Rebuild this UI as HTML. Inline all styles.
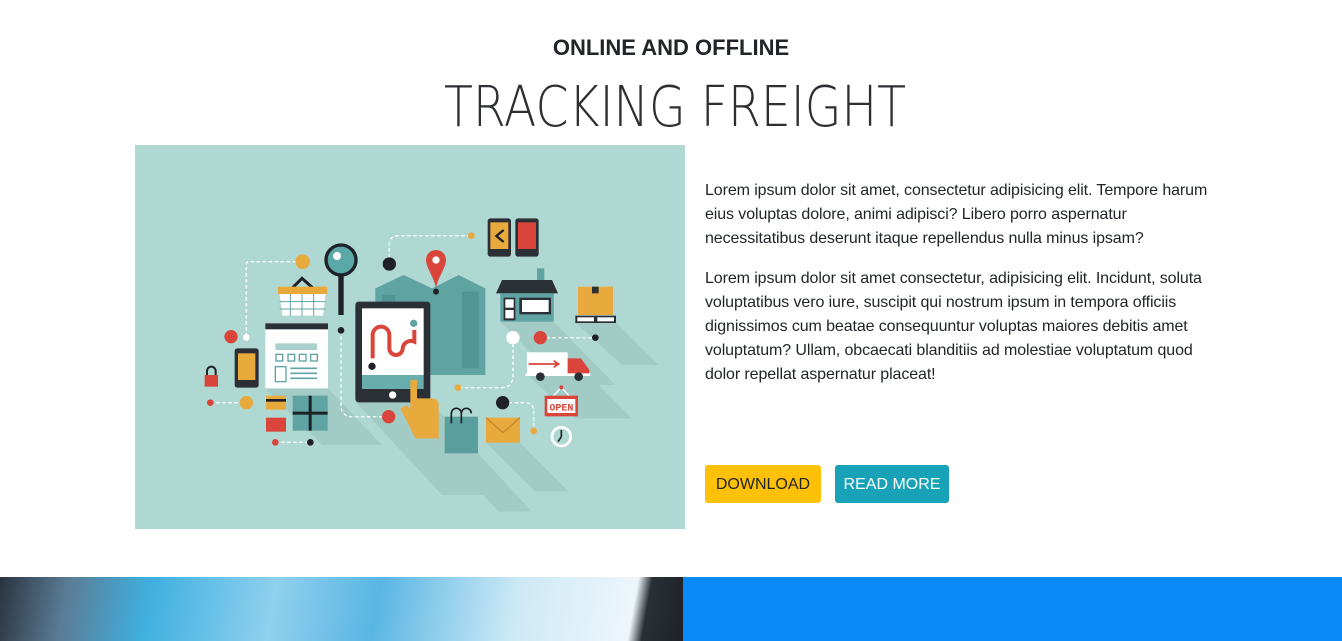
<!DOCTYPE html>
<html><head><meta charset="utf-8"><style>
*{margin:0;padding:0;box-sizing:border-box}
html,body{width:1342px;height:641px;overflow:hidden;background:#fff;font-family:"Liberation Sans",sans-serif;color:#212529}
.sub{position:absolute;top:34px;left:0;width:1342px;text-align:center;font-weight:bold;font-size:22px;color:#212529;line-height:28px}
.title{position:absolute;top:74px;left:0;width:1342px;height:64px}
.img{position:absolute;left:135px;top:145px;width:550px;height:384px;background:#b0d8d3}
.txt{position:absolute;left:705px;top:179px;width:560px;font-size:16px;line-height:24px;color:#212529;white-space:nowrap;letter-spacing:-0.1px}
.txt p{margin-bottom:16px}
.btn{position:absolute;top:465px;height:38px;font-size:16px;line-height:39px;text-align:center;border-radius:3px}
.b1{left:705px;width:116px;background:#ffc107;color:#212529}
.b2{left:835px;width:114px;background:#17a2b8;color:#fff}
.bl{position:absolute;left:0;top:577px;width:683px;height:64px;background:linear-gradient(100deg,#2a3440 0%,#5b7c95 10%,#3fb0e0 22%,#8fd0ee 40%,#5ab6e3 55%,#cde9f6 75%,#eef6fb 92%,#2a2f36 94%,#1e2228 100%)}
.br{position:absolute;left:683px;top:577px;width:659px;height:64px;background:#0a8af8}
</style></head><body>
<div class="sub">ONLINE AND OFFLINE</div>
<svg class="title" width="1342" height="64" viewBox="0 0 1342 64"><text x="444" y="52" textLength="462" lengthAdjust="spacingAndGlyphs" font-family="DejaVu Sans" font-weight="200" font-size="56" fill="#2d2f33">TRACKING FREIGHT</text></svg>
<div class="img">
<svg width="550" height="384" viewBox="0 0 1568 1152">
<rect width="1568" height="1152" fill="#b0d8d3"/>
<g fill="#a2cbc6">
<polygon points="620,770 845,770 1100,1050 880,1050"/>
<polygon points="888,925 988,925 1150,1100 1050,1100"/>
<polygon points="1012,893 1114,893 1260,1040 1160,1040"/>
<polygon points="350,730 538,730 700,900 520,900"/>
<polygon points="1055,530 1215,530 1400,720 1240,720"/>
<polygon points="1280,532 1402,532 1530,660 1420,660"/>
<polygon points="1135,690 1320,690 1450,820 1280,820"/>
</g>
<g fill="none" stroke="#fff" stroke-width="4" stroke-dasharray="10,8">
<path d="M460,350 H300 Q293,350 293,360 V575"/>
<path d="M722,355 V300 Q722,272 750,272 H968"/>
<path d="M577,556 V780 Q577,815 610,815 H720"/>
<path d="M1093,578 V690 Q1093,728 1060,728 H928"/>
<path d="M1175,578 H1340"/>
<path d="M1062,773 H1130 Q1155,773 1155,800 V858"/>
<path d="M185,773 H293"/>
<path d="M380,892 H485"/>
</g>
<g fill="#5fa3a3"><polygon points="680,430 765,390 850,430 850,690 680,690"/><polygon points="850,430 930,390 1010,430 1010,690 850,690"/></g>
<g fill="#4a8d8e" opacity=".6"><rect x="700" y="450" width="40" height="220"/><rect x="940" y="440" width="50" height="230"/></g>
<path d="M862,315 a30,30 0 0 1 30,30 c0,25 -30,60 -30,90 c0,-30 -30,-65 -30,-90 a30,30 0 0 1 30,-30z" fill="#d9453a"/>
<circle cx="862" cy="345" r="11" fill="#fff"/><circle cx="862" cy="440" r="9" fill="#1e2228"/>
<rect x="620" y="470" width="225" height="302" rx="10" fill="#2b2f36"/>
<rect x="640" y="490" width="185" height="200" fill="#fff"/>
<rect x="640" y="690" width="185" height="42" fill="#6aadad"/>
<path d="M672,640 V570 a25,25 0 0 1 50,0 V610 a20,20 0 0 0 40,0 a25,25 0 0 1 35,-20 V555" fill="none" stroke="#d9453a" stroke-width="12"/>
<circle cx="670" cy="664" r="11" fill="#1e2228"/><circle cx="795" cy="535" r="11" fill="#5fa3a3"/>
<circle cx="732" cy="750" r="11" fill="#fff"/>
<path d="M785,705 h20 v55 h45 q20,0 20,20 v100 h-70 l-45,-90 l20,-10 l10,15z" fill="#e8a93d"/>
<circle cx="577" cy="345" r="45" fill="#5aa8a8" stroke="#1e2228" stroke-width="10"/><circle cx="565" cy="333" r="12" fill="#fff"/>
<rect x="569" y="390" width="16" height="120" fill="#1e2228"/>
<path d="M420,440 L460,400 L505,440" fill="none" stroke="#1e2228" stroke-width="9"/>
<rect x="388" y="425" width="148" height="22" fill="#e8a93d"/>
<path d="M393,447 h138 l-8,65 h-122z" fill="#fff"/>
<g stroke="#5fa3a3" stroke-width="3"><line x1="393" y1="470" x2="531" y2="470"/><line x1="393" y1="492" x2="531" y2="492"/><line x1="425" y1="447" x2="425" y2="512"/><line x1="460" y1="447" x2="460" y2="512"/><line x1="495" y1="447" x2="495" y2="512"/></g>
<rect x="350" y="535" width="188" height="195" fill="#fff"/><rect x="350" y="535" width="188" height="18" fill="#2b2f36"/>
<rect x="380" y="595" width="125" height="20" fill="#a9d0cc"/>
<g fill="none" stroke="#5fa3a3" stroke-width="4"><rect x="382" y="628" width="20" height="20"/><rect x="418" y="628" width="20" height="20"/><rect x="452" y="628" width="20" height="20"/><rect x="486" y="628" width="20" height="20"/><rect x="380" y="665" width="32" height="45"/></g>
<g stroke="#5fa3a3" stroke-width="5"><line x1="425" y1="670" x2="505" y2="670"/><line x1="425" y1="685" x2="505" y2="685"/><line x1="425" y1="700" x2="505" y2="700"/></g>
<rect x="258" y="610" width="72" height="118" rx="8" fill="#2b2f36"/><rect x="268" y="625" width="52" height="80" fill="#e8a93d"/>
<rect x="168" y="690" width="40" height="35" fill="#d9453a"/><path d="M175,690 v-12 a13,13 0 0 1 26,0 v12" fill="none" stroke="#1e2228" stroke-width="6"/>
<rect x="352" y="752" width="60" height="42" fill="#e8a93d"/><rect x="352" y="762" width="60" height="8" fill="#1e2228"/>
<rect x="352" y="818" width="60" height="42" fill="#d9453a"/>
<rect x="432" y="752" width="105" height="105" fill="#5fa3a3"/><rect x="480" y="752" width="9" height="105" fill="#1e2228"/><rect x="432" y="800" width="105" height="9" fill="#1e2228"/>
<circle cx="462" cy="350" r="22" fill="#e8a93d"/><circle cx="247" cy="575" r="20" fill="#d9453a"/><circle cx="293" cy="577" r="10" fill="#fff"/>
<circle cx="293" cy="773" r="20" fill="#e8a93d"/><circle cx="185" cy="773" r="10" fill="#d9453a"/>
<circle cx="380" cy="892" r="10" fill="#d9453a"/><circle cx="485" cy="892" r="10" fill="#1e2228"/>
<circle cx="722" cy="357" r="20" fill="#1e2228"/><circle cx="577" cy="556" r="10" fill="#1e2228"/><circle cx="720" cy="815" r="20" fill="#d9453a"/>
<circle cx="968" cy="272" r="10" fill="#e8a93d"/><circle cx="1093" cy="578" r="20" fill="#fff"/><circle cx="1175" cy="578" r="20" fill="#d9453a"/><circle cx="1340" cy="578" r="10" fill="#1e2228"/>
<circle cx="928" cy="728" r="10" fill="#e8a93d"/><circle cx="1062" cy="773" r="20" fill="#1e2228"/><circle cx="1155" cy="858" r="10" fill="#e8a93d"/>
<rect x="1017" y="220" width="70" height="115" rx="8" fill="#2b2f36"/><rect x="1025" y="232" width="54" height="80" fill="#e8a93d"/>
<rect x="1100" y="220" width="70" height="115" rx="8" fill="#2b2f36"/><rect x="1108" y="232" width="54" height="80" fill="#d9453a"/>
<path d="M1065,255 l-22,18 l22,18" fill="none" stroke="#1e2228" stroke-width="7"/>
<rect x="1165" y="370" width="22" height="40" fill="#5fa3a3"/>
<polygon points="1060,405 1210,405 1228,445 1042,445" fill="#2b2f36"/>
<rect x="1055" y="445" width="160" height="85" fill="#5fa3a3"/>
<rect x="1065" y="458" width="35" height="68" fill="#2b2f36"/><rect x="1070" y="463" width="25" height="25" fill="#fff"/><rect x="1070" y="495" width="25" height="25" fill="#fff"/>
<rect x="1112" y="458" width="95" height="50" fill="#2b2f36"/><rect x="1120" y="465" width="80" height="36" fill="#fff"/>
<rect x="1288" y="425" width="105" height="85" fill="#e8a93d"/><rect x="1330" y="425" width="20" height="20" fill="#2b2f36"/>
<rect x="1280" y="512" width="122" height="22" fill="#2b2f36"/><rect x="1286" y="517" width="50" height="12" fill="#fff"/><rect x="1346" y="517" width="50" height="12" fill="#fff"/>
<rect x="1135" y="622" width="122" height="65" fill="#fff"/>
<path d="M1140,657 h90 m-15,-10 l15,10 l-15,10" stroke="#d9453a" stroke-width="5" fill="none"/>
<path d="M1257,640 h40 l25,35 v18 h-65z" fill="#d9453a"/>
<rect x="1130" y="685" width="195" height="8" fill="#fff"/>
<circle cx="1175" cy="695" r="13" fill="#2b2f36"/><circle cx="1290" cy="695" r="13" fill="#2b2f36"/>
<path d="M1215,752 l23,-25 l23,25" fill="none" stroke="#fff" stroke-width="4"/><circle cx="1238" cy="727" r="6" fill="#d9453a"/>
<rect x="1188" y="752" width="100" height="62" fill="#d9453a"/><rect x="1196" y="762" width="84" height="42" fill="#fff"/>
<text x="1238" y="797" font-family="Liberation Mono" font-weight="bold" font-size="30" fill="#d9453a" text-anchor="middle">OPEN</text>
<circle cx="1238" cy="875" r="28" fill="none" stroke="#fff" stroke-width="8"/><path d="M1238,875 v-20 M1238,875 l-10,15" stroke="#1e2228" stroke-width="5"/>
<rect x="888" y="815" width="100" height="110" fill="#5a9e9e"/><path d="M908,835 v-30 a15,15 0 0 1 30,0 M938,835 v-30 a15,15 0 0 1 30,0" fill="none" stroke="#1e2228" stroke-width="5"/>
<rect x="1012" y="818" width="102" height="75" fill="#e8a93d"/><path d="M1012,818 l51,45 l51,-45" fill="none" stroke="#c9862a" stroke-width="4"/>
</svg>
</div>
<div class="txt">
<p>Lorem ipsum dolor sit amet, consectetur adipisicing elit. Tempore harum<br>eius voluptas dolore, animi adipisci? Libero porro aspernatur<br>necessitatibus deserunt itaque repellendus nulla minus ipsam?</p>
<p>Lorem ipsum dolor sit amet consectetur, adipisicing elit. Incidunt, soluta<br>voluptatibus vero iure, suscipit qui nostrum ipsum in tempora officiis<br>dignissimos cum beatae consequuntur voluptas maiores debitis amet<br>voluptatum? Ullam, obcaecati blanditiis ad molestiae voluptatum quod<br>dolor repellat aspernatur placeat!</p>
</div>
<div class="btn b1">DOWNLOAD</div>
<div class="btn b2">READ MORE</div>
<div class="bl"></div>
<div class="br"></div>
</body></html>
